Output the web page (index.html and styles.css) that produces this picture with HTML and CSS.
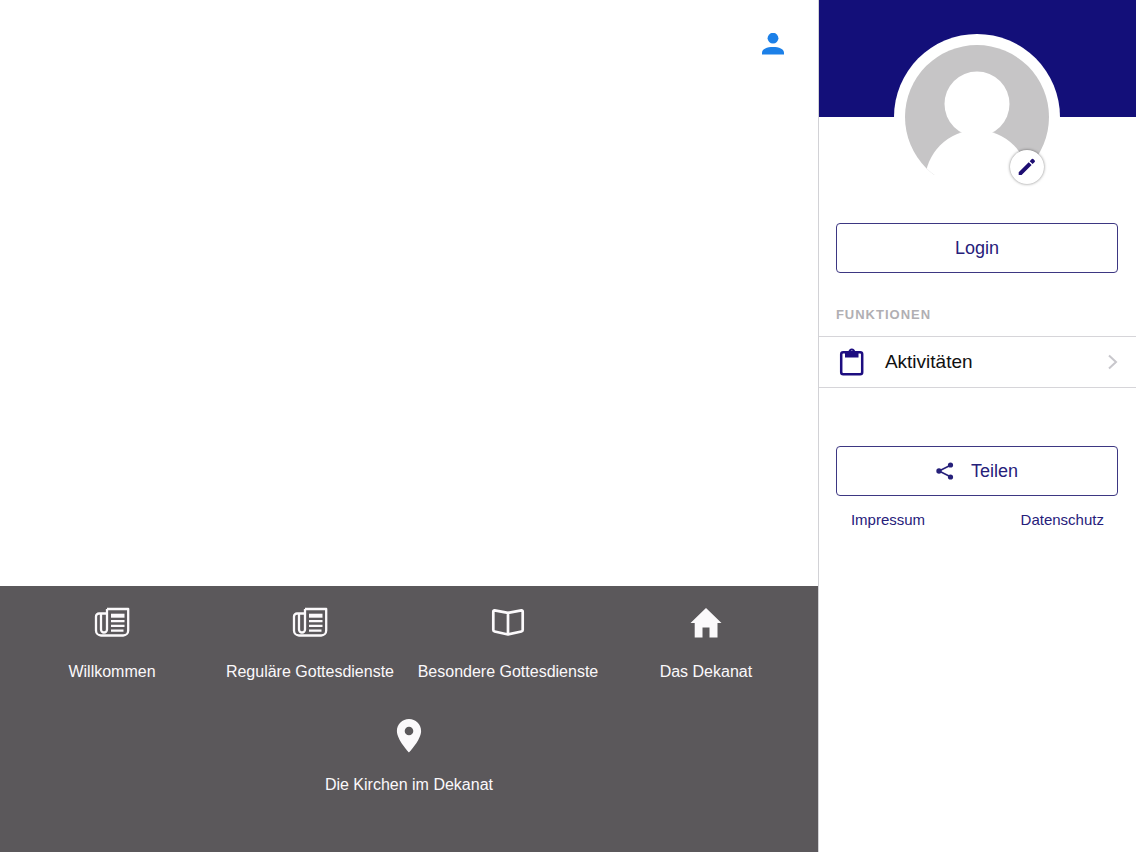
FILE: index.html
```html
<!DOCTYPE html>
<html lang="de">
<head>
<meta charset="utf-8">
<meta name="viewport" content="width=device-width, initial-scale=1">
<title>Dekanat</title>
<link rel="stylesheet" href="styles.css">
</head>
<body>
<div class="app">
  <main class="main">
    <header class="topbar">
      <button class="profile-button" type="button" aria-label="Profil">
        <svg width="22" height="22" viewBox="0 0 22 22" fill="currentColor"><circle cx="11" cy="5.2" r="5.4"/><path d="M0 21.500v-1.800C0 16 5 14 11 14s11 2 11 5.700v1.800z"/></svg>
      </button>
    </header>
    <nav class="tiles">
      <a class="tile" href="#">
        <svg class="tile-icon" viewBox="0 0 36 36" fill="none" stroke="currentColor" stroke-width="2.300"><path d="M13 4H34.200v21.500a5 5 0 0 1-5 5H7a5 5 0 0 1-5-5V11.500a3 3 0 0 1 3-3h8M13 4v20.500a3 3 0 0 1-6 0V9" stroke-linejoin="round"/><path d="M17 10.700H30.500" stroke-width="4"/><path d="M17 16.200H30.500M17 20.900H30.500M17 25.700H29.500"/></svg>
        <span>Willkommen</span>
      </a>
      <a class="tile" href="#">
        <svg class="tile-icon" viewBox="0 0 36 36" fill="none" stroke="currentColor" stroke-width="2.300"><path d="M13 4H34.200v21.500a5 5 0 0 1-5 5H7a5 5 0 0 1-5-5V11.500a3 3 0 0 1 3-3h8M13 4v20.500a3 3 0 0 1-6 0V9" stroke-linejoin="round"/><path d="M17 10.700H30.500" stroke-width="4"/><path d="M17 16.200H30.500M17 20.900H30.500M17 25.700H29.500"/></svg>
        <span>Reguläre Gottesdienste</span>
      </a>
      <a class="tile" href="#">
        <svg class="tile-icon" viewBox="0 0 36 36" fill="none" stroke="currentColor" stroke-width="2.700" stroke-linejoin="round"><path d="M18 7.800L4.600 5.400Q3.300 5.300 3.300 6.700V25Q3.300 26.200 4.600 26.500L18 29.500L31.400 26.500Q32.700 26.200 32.700 25V6.700Q32.700 5.300 31.400 5.400ZM18 7.800V29"/></svg>
        <span>Besondere Gottesdienste</span>
      </a>
      <a class="tile" href="#">
        <svg class="tile-icon" viewBox="0 0 36 36" fill="currentColor"><path d="M18 3L33.500 18H29.500V32.500H21.500V22.500H14.500V32.500H6.700V18H2.500Z"/></svg>
        <span>Das Dekanat</span>
      </a>
      <a class="tile" href="#">
        <svg class="tile-icon" viewBox="0 0 36 36" fill="currentColor"><path fill-rule="evenodd" d="M18 1C11.300 1 5.900 6.300 5.900 13C5.900 21.800 18 34.500 18 34.500S30.100 21.800 30.100 13C30.100 6.300 24.700 1 18 1ZM18 17.300a4.300 4.300 0 1 1 0-8.600a4.300 4.300 0 0 1 0 8.600Z"/></svg>
        <span>Die Kirchen im Dekanat</span>
      </a>
    </nav>
  </main>

  <aside class="sidebar">
    <div class="cover">
      <div class="avatar">
        <svg class="avatar-image" viewBox="0 0 144 144"><defs><clipPath id="face"><circle cx="72" cy="72" r="72"/></clipPath></defs><g clip-path="url(#face)"><rect width="144" height="130" fill="#c6c5c6"/><circle cx="72" cy="59" r="32.500" fill="#fff"/><circle cx="72" cy="137" r="52" fill="#fff"/></g></svg>
        <button class="edit-button" type="button" aria-label="Profilbild bearbeiten">
          <svg width="18" height="18" viewBox="0 0 18 18" fill="currentColor"><path d="M.700 14.200L10.700 4.200L13.600 7.100L3.600 17.100H.700ZM11.700 3.200L13.800 1.100Q14.500.500 15.200 1.100L16.700 2.600Q17.300 3.300 16.700 4L14.600 6.100Z"/></svg>
        </button>
      </div>
    </div>
    <button class="button login" type="button">Login</button>
    <h2 class="section-title">Funktionen</h2>
    <a class="row" href="#">
      <svg width="26" height="28" viewBox="0 0 26 28"><rect x="2.200" y="4.200" width="21" height="22" rx="2" fill="none" stroke="currentColor" stroke-width="2.500"/><path fill="currentColor" fill-rule="evenodd" d="M6 4h3.300Q9.800.500 12.800.500T16.300 4H19.500v5.500H6ZM12.800 5a1.200 1.200 0 1 0 0-2.400a1.200 1.200 0 0 0 0 2.400Z"/></svg>
      <span class="row-label">Aktivitäten</span>
      <svg class="chevron" width="10" height="16" viewBox="0 0 10 16" fill="none" stroke="currentColor" stroke-width="2"><path d="M1 1.500L8 8L1 14.500"/></svg>
    </a>
    <button class="button share" type="button">
      <svg width="18" height="18" viewBox="0 0 18 18" fill="currentColor"><path d="M15 3L3 9L15 15" fill="none" stroke="currentColor" stroke-width="1.600"/><circle cx="14.500" cy="3" r="2.600"/><circle cx="3" cy="9" r="2.700"/><circle cx="14.500" cy="15" r="2.600"/></svg>
      <span>Teilen</span>
    </button>
    <footer class="links">
      <a href="#">Impressum</a>
      <a href="#">Datenschutz</a>
    </footer>
  </aside>
</div>
</body>
</html>
```

FILE: styles.css
```css
* { box-sizing: border-box; }

body {
  margin: 0;
  background: #fff;
  font-family: "Liberation Sans", Arial, sans-serif;
}

a { color: inherit; text-decoration: none; }

button { font: inherit; cursor: pointer; }

svg { display: block; flex: none; }

.app {
  display: grid;
  grid-template-columns: 72fr 28fr;
  min-height: 100vh;
}

.main {
  display: flex;
  flex-direction: column;
  justify-content: space-between;
}

.topbar {
  display: flex;
  justify-content: flex-end;
  padding: 28px 29px;
}

.profile-button {
  padding: 5px;
  border: 0;
  background: none;
  color: #1c80e8;
}

.tiles {
  display: flex;
  flex-wrap: wrap;
  justify-content: center;
  padding: 19px 13px 21px;
  background: #5b585b;
  color: #fff;
}

.tile {
  display: flex;
  flex: 0 0 25%;
  flex-direction: column;
  align-items: center;
  gap: 21px;
  height: 113px;
  color: #fbf9fb;
  font-size: 16px;
  line-height: 20px;
  white-space: nowrap;
}

.tile-icon {
  width: 36px;
  height: 36px;
}

.sidebar {
  display: flex;
  flex-direction: column;
  border-left: 1px solid #d2d2d6;
  color: #26207a;
}

.cover {
  display: flex;
  justify-content: center;
  height: 117px;
  padding-top: 34px;
  background: #130f79;
}

.avatar {
  position: relative;
  width: 166px;
  height: 166px;
  padding: 11px;
  border-radius: 50%;
  background: #fff;
}

.avatar-image { width: 100%; }

.edit-button {
  position: absolute;
  right: 16px;
  bottom: 16px;
  display: grid;
  place-items: center;
  width: 34px;
  height: 34px;
  padding: 0;
  border: 0;
  border-radius: 50%;
  background: #fff;
  box-shadow: 0 0 3px #00000080;
  color: #1d0d72;
}

.button {
  display: flex;
  align-items: center;
  justify-content: center;
  gap: 17px;
  height: 50px;
  margin: 0 18px 0 17px;
  border: 1px solid #3d3782;
  border-radius: 4px;
  background: #fff;
  color: #26207a;
  font-size: 18px;
}

.login { margin-top: 106px; }

.section-title {
  margin: 32px 17px 11px;
  color: #b1afb3;
  font-size: 13px;
  line-height: 20px;
  letter-spacing: 1px;
  text-transform: uppercase;
}

.row {
  display: flex;
  align-items: center;
  height: 52px;
  padding: 0 18px 0 20px;
  border: solid #d6d5d9;
  border-width: 1px 0;
  color: #1d0d80;
}

.row-label {
  flex: 1;
  margin-left: 20px;
  color: #111;
  font-size: 19px;
}

.chevron { color: #c8c7cc; }

.share { margin-top: 58px; }

.links {
  display: flex;
  justify-content: space-between;
  padding: 14px 32px;
  font-size: 15px;
  line-height: 20px;
}
```
